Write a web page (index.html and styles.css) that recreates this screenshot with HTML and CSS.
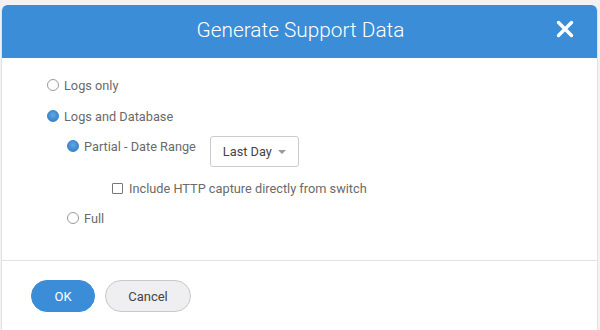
FILE: index.html
```html
<!DOCTYPE html>
<html>
<head>
<meta charset="utf-8">
<link rel="stylesheet" href="styles.css">
</head>
<body>
<div class="dialog">
  <div class="header">
    <span class="title">Generate Support Data</span>
    <span class="close">
      <svg width="18" height="18" viewBox="0 0 18 18"><path d="M2.5 2.5 L15.5 15.5 M15.5 2.5 L2.5 15.5" stroke="#fff" stroke-width="3.4" stroke-linecap="round"/></svg>
    </span>
  </div>
  <div class="body">
    <label class="opt lvl0"><span class="radio"></span>Logs only</label>
    <label class="opt lvl0 second"><span class="radio on"></span>Logs and Database</label>
    <div class="row lvl1">
      <label class="opt"><span class="radio on"></span>Partial - Date Range</label>
      <div class="select">Last Day <span class="caret"></span></div>
    </div>
    <label class="opt lvl2"><span class="check"></span>Include HTTP capture directly from switch</label>
    <label class="opt lvl1 full"><span class="radio"></span>Full</label>
  </div>
  <div class="footer">
    <button class="btn primary">OK</button>
    <button class="btn secondary">Cancel</button>
  </div>
</div>
</body>
</html>
```
FILE: styles.css
```css
html, body {
  margin: 0;
  padding: 0;
  background: #f2f2f2;
  font-family: Roboto, "Liberation Sans", sans-serif;
}
body {
  padding: 5px 2px 0 1px;
  height: 325px;
  overflow: hidden;
}
.dialog {
  background: #fff;
  border-radius: 6px 6px 0 0;
  border: 1px solid #e2e2e2;
  border-top: none;
  height: 330px;
  overflow: hidden;
}
.header {
  background: #3a8dd6;
  height: 53px;
  border-radius: 6px 6px 0 0;
  margin: 0 -1px;
  display: flex;
  align-items: center;
  justify-content: center;
  position: relative;
}
.title {
  color: #fff;
  font-size: 20.8px;
  font-weight: 300;
  margin-top: -4px;
  margin-left: 2px;
}
.close {
  position: absolute;
  right: 24px;
  top: 15px;
  width: 18px;
  height: 18px;
}
.close svg { display: block; }
.body {
  padding-top: 17px;
  height: 185px;
  border-bottom: 1px solid #e2e2e2;
}
.opt {
  display: flex;
  align-items: center;
  font-size: 12.75px;
  color: #6a6a6a;
  height: 20px;
}
.lvl0 { padding-left: 45px; }
.second { margin-top: 11px; }
.lvl1 { padding-left: 65px; }
.lvl2 { padding-left: 110px; margin-top: 11px; }
.full { margin-top: 10px; }
.row {
  display: flex;
  align-items: flex-start;
  margin-top: 10px;
}
.row .opt { padding-left: 0; }
.radio {
  width: 10px;
  height: 10px;
  border: 1px solid #9a9a9a;
  border-radius: 50%;
  margin-right: 5px;
  background: #fff;
}
.radio.on {
  border-color: #3a82c4;
  background: radial-gradient(circle at 50% 40%, #62a6e2 0%, #3a85c9 75%);
}
.check {
  width: 9px;
  height: 9px;
  border: 1px solid #777;
  border-radius: 1px;
  margin-right: 6px;
  background: #fff;
}
.select {
  margin-left: 14px;
  width: 89px;
  height: 31px;
  border: 1px solid #ccc;
  border-radius: 3px;
  box-sizing: border-box;
  display: flex;
  align-items: center;
  padding-left: 12px;
  font-size: 12.75px;
  color: #444;
}
.caret {
  display: inline-block;
  width: 0;
  height: 0;
  border-left: 4px solid transparent;
  border-right: 4px solid transparent;
  border-top: 4px solid #999;
  margin-left: 6px;
  margin-top: 1px;
}
.footer {
  display: flex;
  gap: 10px;
  padding: 19px 0 0 29px;
}
.btn {
  height: 32px;
  border-radius: 16px;
  font-family: Roboto, "Liberation Sans", sans-serif;
  font-size: 13px;
  padding: 0;
}
.primary {
  width: 64px;
  background: #3a8dd6;
  border: 1px solid #3a8dd6;
  color: #fff;
}
.secondary {
  width: 86px;
  background: #efeff1;
  border: 1px solid #c8c8c8;
  color: #444;
}
```
